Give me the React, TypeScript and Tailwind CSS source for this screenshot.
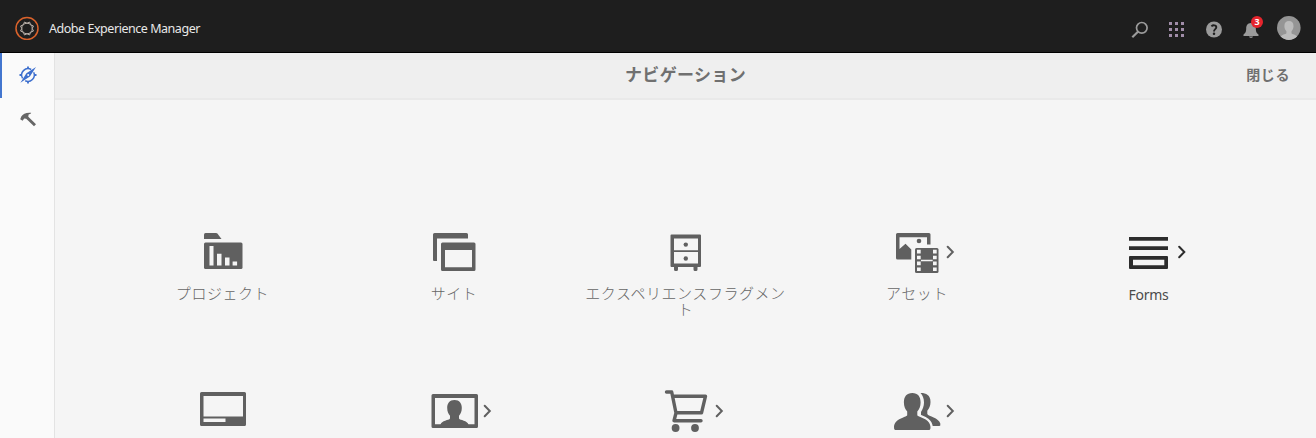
import type { ReactNode } from 'react';

type Tile = { id: string; label?: string; icon: ReactNode; more?: boolean; active?: boolean };

const PAPER = '#f5f5f5';

const tiles: Tile[] = [
  {
    id: 'projects',
    label: 'プロジェクト',
    icon: (
      <>
        <path d="M10 11V6.5Q10 5 11.5 5H22Q23 5 23.6 5.8L27.5 11Z" />
        <rect x="10" y="14.5" width="38.5" height="26.5" rx="1.5" />
        <path fill={PAPER} d="M15.5 18h4v19.5h-4zM23 25.8h4.5v11.7H23zM31 29.6h4.5v7.9H31zM38.6 33.4h4.5v4.1h-4.5z" />
      </>
    ),
  },
  {
    id: 'sites',
    label: 'サイト',
    icon: (
      <>
        <path d="M8 32V6.500Q8 5 9.500 5H41.500Q43 5 43 6.500V10.500H12V33H9Q8 33 8 32Z" />
        <path fillRule="evenodd" d="M17.500 14.500H49Q50.500 14.500 50.500 16V41.500Q50.500 43 49 43H17.500Q16 43 16 41.500V16Q16 14.500 17.500 14.500ZM20 22V39.300H47V22Z" />
      </>
    ),
  },
  {
    id: 'experience-fragments',
    label: 'エクスペリエンスフラグメント',
    icon: (
      <>
        <path fillRule="evenodd" d="M14.500 6.500H43Q44 6.500 44 7.500V38Q44 39 43 39H14.500Q13.500 39 13.500 38V7.500Q13.500 6.500 14.500 6.500ZM17 10.500V22.200H41V10.500ZM17 24V35.500H41V24Z" />
        <circle cx="28.800" cy="16.600" r="2.200" />
        <circle cx="28.800" cy="30.500" r="2.200" />
        <path d="M17 38h4v3.500q0 1.500-1.500 1.500h-1q-1.500 0-1.500-1.500zM36.500 38h4v3.500q0 1.500-1.500 1.500h-1q-1.500 0-1.500-1.500z" />
      </>
    ),
  },
  {
    id: 'assets',
    label: 'アセット',
    more: true,
    icon: (
      <>
        <path d="M8 6.500Q8 5 9.500 5H41Q42.500 5 42.500 6.500V16.500H39V9.200H11.500V21L17.500 15.800L23.300 21.500V31.500H9.500Q8 31.500 8 30Z" />
        <circle cx="31" cy="13" r="2.300" />
        <rect x="27" y="20" width="23.500" height="25" rx="1.500" />
        <path fill={PAPER} d="M29 21.800h3.700v3.600H29zM29 27.700h3.700v3.600H29zM29 33.600h3.700v3.600H29zM29 39.500h3.700v3.600H29zM45 21.800h3.700v3.600H45zM45 27.700h3.700v3.600H45zM45 33.600h3.700v3.600H45zM45 39.500h3.700v3.600H45zM33 31.800h11.700v1.400H33z" />
      </>
    ),
  },
  {
    id: 'forms',
    label: 'Forms',
    more: true,
    active: true,
    icon: (
      <>
        <path d="M9 9h39v3.700H9zM9 18.300h39V22H9z" />
        <path fillRule="evenodd" d="M10 28H47Q48 28 48 29V40Q48 41 47 41H10Q9 41 9 40V29Q9 28 10 28ZM13 31.800V37.200H44.300V31.800Z" />
      </>
    ),
  },
  {
    id: 'screens',
    icon: (
      <path fillRule="evenodd" d="M7.500 5H50.500Q52 5 52 6.500V37.500Q52 39 50.500 39H7.500Q6 39 6 37.500V6.500Q6 5 7.500 5ZM9.500 9V29.500H49V9ZM9.500 31.500V35H31.500V31.500Z" />
    ),
  },
  {
    id: 'personalization',
    more: true,
    icon: (
      <>
        <path fillRule="evenodd" d="M8 7H51.500Q53 7 53 8.500V39.500Q53 41 51.500 41H8Q6.500 41 6.500 39.500V8.500Q6.500 7 8 7ZM10 11V37.300H49.500V11Z" />
        <path d="M29.500 13c5 0 7.300 3.300 7.300 8 0 3.500-1.200 6-2.800 7.800v2.700c1 2 8.500 1.500 9.600 6.500H15.400c1.100-5 8.600-4.500 9.600-6.500v-2.700c-1.600-1.800-2.800-4.300-2.800-7.800 0-4.700 2.300-8 7.300-8Z" />
      </>
    ),
  },
  {
    id: 'commerce',
    more: true,
    icon: (
      <>
        <path fill="none" stroke="currentColor" strokeWidth="3.400" strokeLinejoin="round" strokeLinecap="round" d="M9.500 5H14.700L19 26L17 33.700H44M16.500 9.200H48.500L44.500 25.800H19" />
        <circle cx="18.600" cy="41" r="3.900" />
        <circle cx="38" cy="41" r="3.900" />
      </>
    ),
  },
  {
    id: 'communities',
    more: true,
    icon: (
      <>
        <path d="M33 6c5 0 9.500 2 9.500 9 0 4-1.400 6.700-3.200 8.800v3.200c1.200 2.500 11.500 3.600 13 9.500q.5 2.500-1 2.500H43C40.500 32 37 30 33 29v-4c1.500-2.500 3-5.500 3-9.500 0-4-1.500-7.500-3.500-9.500Z" />
        <path stroke={PAPER} strokeWidth="4.500" paintOrder="stroke" d="M24.300 6c5.700 0 8.300 3.700 8.300 9.500 0 4-1.400 7-3.300 9v3.800c1.500 2.500 12.500 2.700 13.200 11.700q.1 3-1 3H7q-1.100 0-1-3c.7-9 11.900-9.200 13.200-11.700v-3.800c-1.900-2-3.300-5-3.300-9C15.900 9.700 18.600 6 24.300 6Z" />
      </>
    ),
  },
];

function TileItem({ tile }: { tile: Tile }) {
  return (
    <a className={`flex h-[159px] flex-col ${tile.active ? 'text-[#2c2c2c]' : 'text-[#606060]'}`}>
      <svg className="ml-[87px] h-12 w-[72px]" viewBox="0 0 72 48" fill="currentColor">
        {tile.icon}
        {tile.more && (
          <path
            d={tile.active ? 'M59.200 18.800L64.300 24L59.200 29.200' : 'M59.700 18.800L64.800 24L59.700 29.200'}
            fill="none"
            stroke="currentColor"
            strokeWidth="2"
            strokeLinecap="round"
          />
        )}
      </svg>
      {tile.label && (
        <span
          className={`text-center leading-4 ${
            tile.active
              ? "mx-[11px] mt-[11px] font-['Noto_Sans'] text-[14px] tracking-[-0.3px] text-[#4b4b4b]"
              : "mx-[10px] mt-[9px] font-['Noto_Sans_CJK_JP',sans-serif] text-[15px] font-light tracking-[0.55px] text-[#666666]"
          }`}
        >
          {tile.label}
        </span>
      )}
    </a>
  );
}

function Header() {
  return (
    <header className="flex h-[53px] shrink-0 items-start border-b border-black bg-[#1e1e1e] pl-[15px] pr-[15px]">
      <svg className="mt-4 h-6 w-6" viewBox="0 0 24 24" fill="none">
        <circle cx="12" cy="12.500" r="11" stroke="#d9622b" strokeWidth="1.500" />
        <g stroke="#b5aca5" strokeWidth="1">
          <circle cx="12" cy="12.500" r="5.300" />
          <path d="M9.500 6L12 7.300L14.500 6L15.700 8.700L18.500 10L17.200 12.500L18.500 15L15.700 16.300L14.500 19L12 17.700L9.500 19L8.300 16.300L5.500 15L6.800 12.500L5.500 10L8.300 8.700Z" />
        </g>
      </svg>
      <h1 className="ml-[10px] mt-[19px] whitespace-nowrap font-['Noto_Sans'] text-[12.5px] leading-5 tracking-[-0.46px] text-[#e8e8e8]">
        Adobe Experience Manager
      </h1>
      <div className="ml-auto flex items-start text-[#9b9b9b]">
        <svg className="mt-[21px] h-[18px] w-[18px]" viewBox="0 0 18 18" fill="none" stroke="currentColor">
          <circle cx="10.800" cy="6.800" r="5.300" strokeWidth="1.700" />
          <path d="M7.200 10.500L1.300 16.200" strokeWidth="2.200" />
        </svg>
        <svg className="ml-[18px] mt-[21px] h-[18px] w-[18px]" viewBox="0 0 18 18" fill="#a08da8">
          <path d="M2 1h3v3H2zM8 1h3v3H8zM14 1h3v3h-3zM2 7h3v3H2zM8 7h3v3H8zM14 7h3v3h-3zM2 13h3v3H2zM8 13h3v3H8zM14 13h3v3h-3z" />
        </svg>
        <svg className="ml-[20px] mt-[21px] h-[18px] w-[18px]" viewBox="0 0 18 18">
          <circle cx="9" cy="8.500" r="8" fill="currentColor" />
          <path d="M6.400 5.300C7.700 4 11.300 3.700 11.300 6.300C11.300 8.200 9 8.100 9 10.400" fill="none" stroke="#1e1e1e" strokeWidth="1.900" />
          <circle cx="9" cy="12.800" r="1.250" fill="#1e1e1e" />
        </svg>
        <div className="relative ml-[19px] mt-[21px] h-[18px] w-[18px]">
          <svg className="h-[18px] w-[18px]" viewBox="0 0 18 18" fill="currentColor">
            <path d="M9 2c3.600 0 4.800 2.800 4.800 5.300 0 4.200 1.200 5 2.600 6.200.5.500.3 1.500-.4 1.500H2c-.7 0-.9-1-.4-1.500C3 12.300 4.200 11.500 4.200 7.300 4.200 4.800 5.400 2 9 2ZM7 15.500h4c0 1.900-4 1.900-4 0Z" />
          </svg>
          <span className="absolute -top-[5px] left-[9px] flex h-3 w-3 items-center justify-center rounded-full bg-[#e6252d] font-['Noto_Sans'] text-[9px] font-bold leading-3 text-white">
            3
          </span>
        </div>
        <svg className="ml-[17px] mt-4 h-6 w-6" viewBox="0 0 24 24">
          <circle cx="11.800" cy="11.800" r="11.800" fill="#959595" />
          <path d="M12 5c3 0 4.700 2 4.500 5.500-.1 2-1 3.700-2 4.800v1.900c.7 1.100 4.700 1.300 5.500 3.400a11.500 11.500 0 0 1-16.300 0c.8-2.100 5-2.300 5.700-3.400v-1.900c-1-1.100-1.900-2.800-2-4.800C7.200 7 9 5 12 5Z" fill="#bcbcbc" />
        </svg>
      </div>
    </header>
  );
}

function Rail() {
  return (
    <nav className="flex w-[55px] shrink-0 flex-col border-r border-[#e3e3e3] bg-[#fafafa]">
      <a className="flex h-[45px] items-center border-l-2 border-[#4376cf] pb-px pl-[17px] text-[#3d6fce]">
        <svg className="h-[18px] w-[18px]" viewBox="0 0 18 18" fill="none" stroke="currentColor">
          <path d="M3.600 12.400A6.400 6.400 0 0 1 12.200 3.500M14.700 6.200A6.400 6.400 0 0 1 6.200 14.700" strokeWidth="1.500" />
          <path d="M9 .500v2.500M9 15v2.500M.500 9h2.500M15 9h2.500" strokeWidth="1.800" />
          <path d="M17 1L10.900 10.600L7.400 7.200ZM1.400 16.800L7.400 7.200L10.900 10.600Z" fill="currentColor" stroke="none" />
          <circle cx="9.200" cy="8.900" r="1" fill="#fafafa" stroke="none" />
        </svg>
      </a>
      <a className="flex h-[42px] items-center pl-[19px] text-[#666666]">
        <svg className="h-[18px] w-[18px]" viewBox="0 0 18 18" fill="currentColor">
          <path d="M1.200 9.200L2.300 6.500C4 4 7 2.300 12 2.800C12.500 3.300 11.800 3.700 9.600 4.500L9.300 6.700L17 14.200L15 16.300L7.200 8.800L5.200 8.600L3.600 10.800Z" />
        </svg>
      </a>
    </nav>
  );
}

export default function App() {
  return (
    <div className="flex h-[438px] w-[1316px] flex-col overflow-hidden bg-[#f5f5f5]">
      <Header />
      <div className="flex min-h-0 flex-1">
        <Rail />
        <main className="min-w-0 flex-1">
          <div className="grid h-[47px] grid-cols-[1fr_auto_1fr] items-center border-b-2 border-[#e9e9e9] bg-[#efefef] pb-[3px] font-['Noto_Sans_CJK_JP',sans-serif] font-bold text-[#707070]">
            <h2 className="col-start-2 text-[17px] leading-6 tracking-[0.35px]">ナビゲーション</h2>
            <button className="mr-[26px] justify-self-end text-[14px] leading-6 tracking-[0.6px]">閉じる</button>
          </div>
          <div className="grid grid-cols-[231px_232px_231px_232px_231px] pl-[52px] pt-32">
            {tiles.map((tile) => (
              <TileItem key={tile.id} tile={tile} />
            ))}
          </div>
        </main>
      </div>
    </div>
  );
}
